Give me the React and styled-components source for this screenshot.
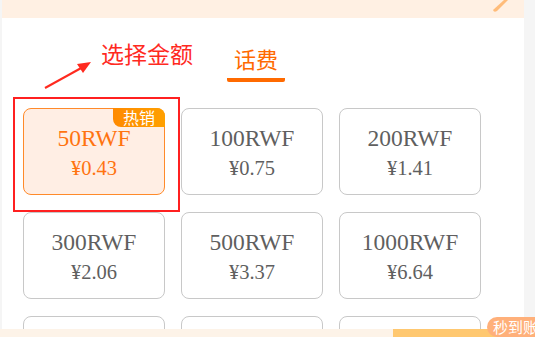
import React from 'react';
import styled, { createGlobalStyle } from 'styled-components';

const GlobalStyle = createGlobalStyle`
    body {
        margin: 0;
        background: #f5f5f5;
        font-family: "Liberation Serif", "Noto Sans CJK SC", serif;
    }
`;

const amounts = [
    { value: '50RWF', price: '¥0.43', hot: true },
    { value: '100RWF', price: '¥0.75' },
    { value: '200RWF', price: '¥1.41' },
    { value: '300RWF', price: '¥2.06' },
    { value: '500RWF', price: '¥3.37' },
    { value: '1000RWF', price: '¥6.64' },
    { value: '', price: '' },
    { value: '', price: '' },
    { value: '', price: '' },
];

const App = () => {
    return (<Page>
        <GlobalStyle />
        <Panel>
            <TopBand>
                <Brush width="20" height="14" viewBox="0 0 20 14">
                    <path d="M13 0 L17 0 L6 11 Q3 13 2 10 Z" fill="#ffbc7a" />
                </Brush>
            </TopBand>

            <Header>
                <Arrow width="58" height="34" viewBox="0 0 58 34">
                    <line x1="2" y1="31" x2="40" y2="10" stroke="#ff2a1f" strokeWidth="2" />
                    <path d="M48 5 L34 7 L40 16 Z" fill="#ff2a1f" />
                </Arrow>
                <Annotation>选择金额</Annotation>
                <Tab>话费</Tab>
            </Header>

            <Grid>
                <Highlight />
                {amounts.map((item, i) => (
                    <Card key={i} selected={item.hot}>
                        {item.hot && <Badge>热销</Badge>}
                        <Amount>{item.value}</Amount>
                        <Price>{item.price}</Price>
                    </Card>
                ))}
            </Grid>
        </Panel>

        <BottomBar>
            <BarLeft />
            <BarRight />
            <Tag>秒到账</Tag>
        </BottomBar>
    </Page>);
};

export default App;

const Page = styled.div`
    position: relative;
    width: 535px;
    height: 337px;
    overflow: hidden;
    background: #f5f5f5;
`;

const Panel = styled.div`
    margin-left: 2px;
    width: 522px;
    height: 100%;
    background: #fff;
`;

const TopBand = styled.div`
    position: relative;
    height: 18px;
    background: #fff0e3;
`;

const Brush = styled.svg`
    position: absolute;
    left: 489px;
    top: 0;
`;

const Header = styled.div`
    height: 79px;
    display: flex;
    align-items: flex-start;
    padding-left: 41px;
    box-sizing: border-box;
`;

const Arrow = styled.svg`
    margin-top: 39px;
    flex-shrink: 0;
`;

const Annotation = styled.div`
    margin-top: 20px;
    font-family: "Noto Sans CJK SC", sans-serif;
    font-size: 23px;
    line-height: 30px;
    color: #ff2a1f;
`;

const Tab = styled.div`
    margin: 25px 0 0 34px;
    width: 58px;
    padding-bottom: 5px;
    border-bottom: 4px solid #ff6a00;
    border-radius: 2px;
    text-align: center;
    font-family: "Noto Sans CJK SC", sans-serif;
    font-size: 22px;
    line-height: 30px;
    color: #ff6a00;
`;

const Grid = styled.div`
    position: relative;
    display: grid;
    grid-template-columns: repeat(3, 142px);
    grid-auto-rows: 87px;
    column-gap: 16px;
    row-gap: 17px;
    padding: 11px 0 0 21px;
`;

const Highlight = styled.div`
    position: absolute;
    left: 11px;
    top: 0;
    width: 163px;
    height: 111px;
    border: 2px solid #ff2020;
    pointer-events: none;
`;

const Card = styled.div`
    position: relative;
    display: flex;
    flex-direction: column;
    justify-content: center;
    align-items: center;
    box-sizing: border-box;
    border: 1px solid ${(props) => (props.selected ? '#ff8a2a' : '#c8c8c8')};
    border-radius: 8px;
    background: ${(props) => (props.selected ? '#ffeee4' : '#fff')};
    color: ${(props) => (props.selected ? '#ff7310' : '#5f5f5f')};
    padding-top: 2px;
`;

const Badge = styled.div`
    position: absolute;
    right: -1px;
    top: -1px;
    width: 52px;
    height: 19px;
    border-radius: 0 8px 0 8px;
    background: linear-gradient(90deg, #ff8a00, #ffa000);
    color: #fff;
    font-family: "Noto Sans CJK SC", sans-serif;
    font-size: 16px;
    line-height: 19px;
    text-align: center;
`;

const Amount = styled.div`
    font-size: 23.5px;
    line-height: 30px;
`;

const Price = styled.div`
    font-size: 20.5px;
    line-height: 30px;
`;

const BottomBar = styled.div`
    position: absolute;
    left: 0;
    bottom: 0;
    width: 100%;
    height: 8px;
    display: flex;
`;

const BarLeft = styled.div`
    width: 393px;
    background: #fdf3e8;
`;

const BarRight = styled.div`
    flex: 1;
    background: #ffc870;
`;

const Tag = styled.div`
    position: absolute;
    left: 487px;
    bottom: 0;
    height: 20px;
    padding: 0 6px;
    border-radius: 10px 0 0 10px;
    background: #ffb07a;
    color: #fff;
    font-family: "Noto Sans CJK SC", sans-serif;
    font-size: 15px;
    line-height: 20px;
    white-space: nowrap;
`;
